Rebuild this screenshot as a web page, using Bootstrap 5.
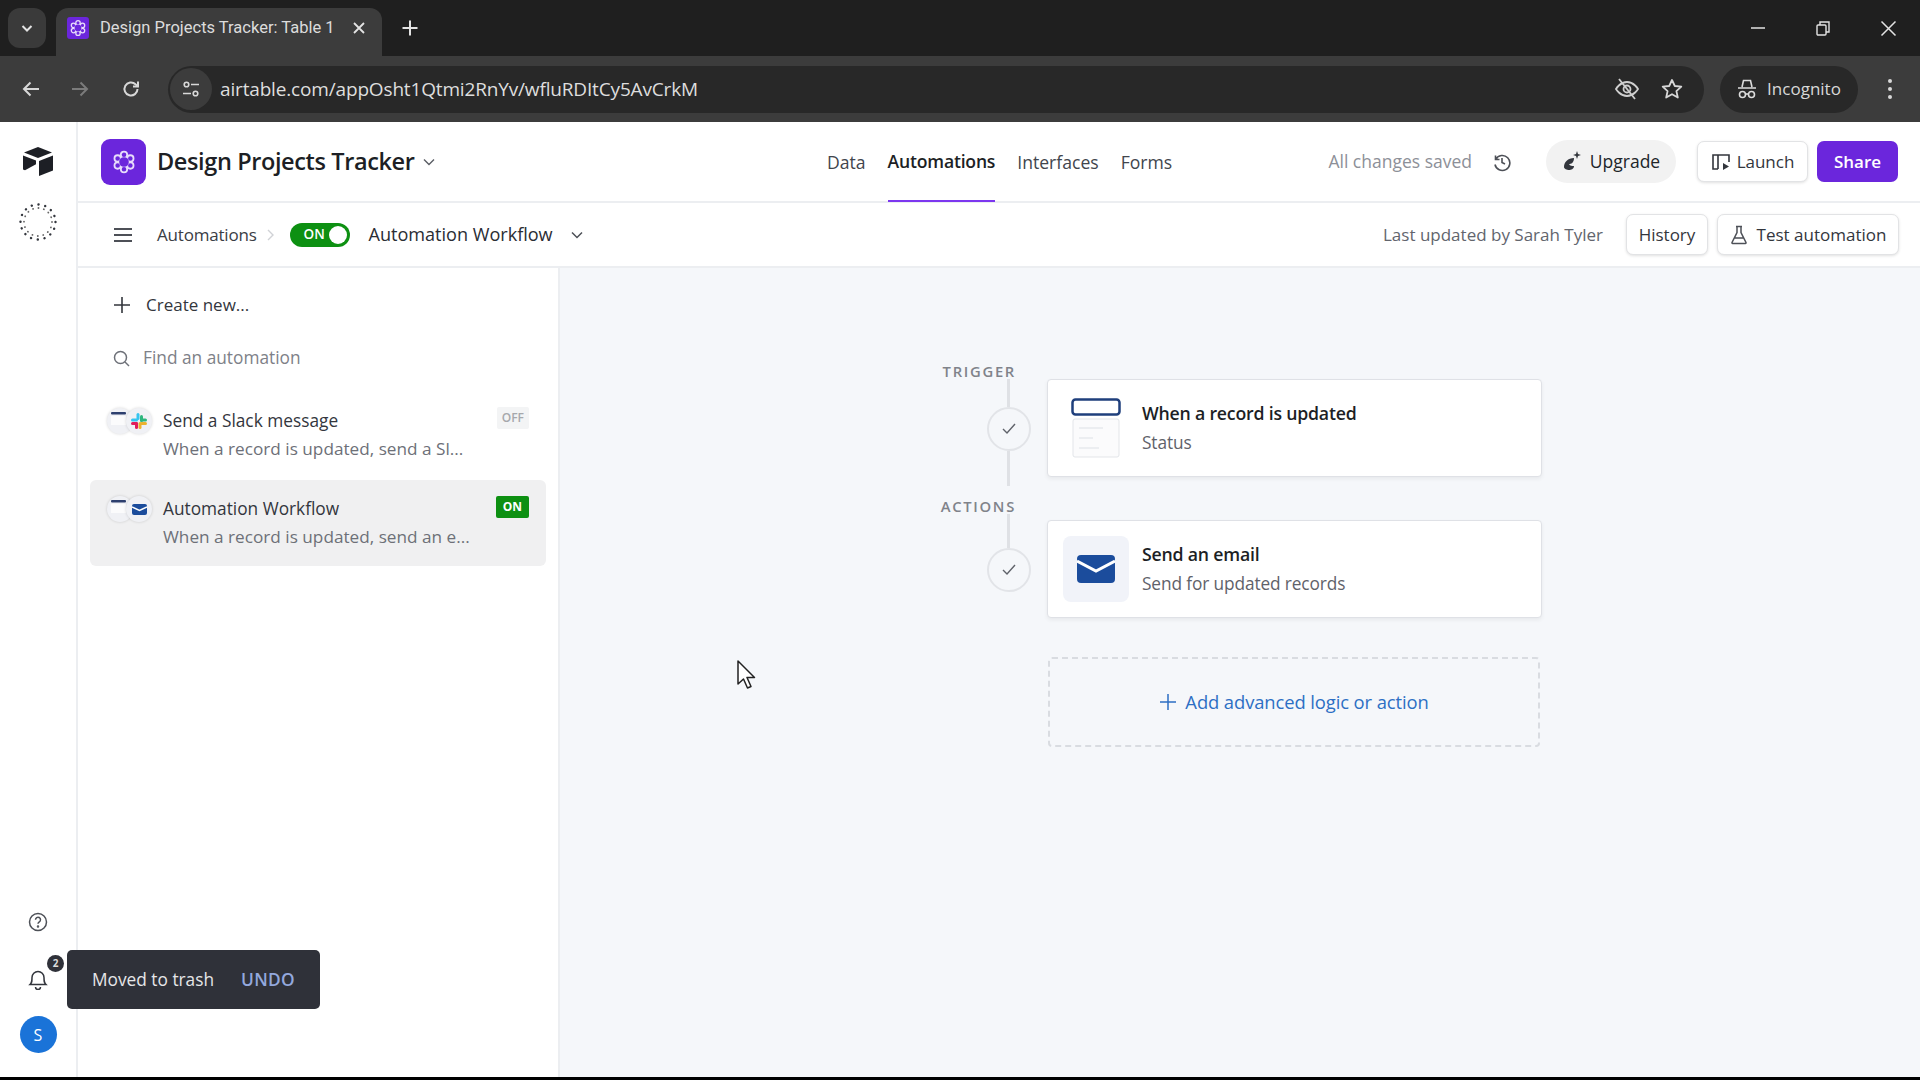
<!doctype html>
<html lang="en">
<head>
<meta charset="utf-8">
<title>Design Projects Tracker</title>
<link href="https://cdn.jsdelivr.net/npm/bootstrap@5.3.0/dist/css/bootstrap.min.css" rel="stylesheet">
<style>
html,body{height:1080px;overflow:hidden;background:#000}
body{font-family:"Open Sans","Noto Sans",sans-serif;color:#1d1f25;width:1920px;position:relative}
svg{display:block;flex:none}
.tabbar{height:56px;background:#1f1f1f;padding-left:8px;color:#e3e3e3}
.tabdrop{width:38px;height:40px;margin-top:8px;background:#3a3a3a;border-radius:12px}
.chrometab{width:326px;height:48px;margin-top:8px;margin-left:10px;background:#3c3c3c;border-radius:12px 12px 0 0;padding:0 16px 8px 11px;font-size:16.5px;white-space:nowrap}
.chrometab .tabname{width:236px;margin-left:11px;overflow:hidden;color:#dcdcdc;font-family:Roboto,sans-serif}
.addtab{margin-left:19px}
.winctl{gap:49px;padding-right:23px}
.toolbar{height:66px;background:#3c3c3c;padding:9px 15px 9px 21px;color:#d8d8d8}
.omni{width:1536px;height:47px;margin-left:27px;background:#282828;border-radius:24px;padding-right:20px}
.tunebtn{width:42px;height:42px;margin-left:2px;background:#3c3c3c;border-radius:50%}
.urltext{font-size:19px;margin-left:8px;color:#dedede;white-space:nowrap;letter-spacing:-.16px}
.fwdgap{margin-left:29px}
.relgap{margin-left:31px}
.stargap{margin-left:20px}
.incog{width:138px;height:47px;margin-left:16px;background:#282828;border-radius:24px;font-size:17px;gap:10px}
.apparea{height:955px;background:#fff}
.rail{width:78px;border-right:2px solid #eceef1;padding:24px 0 24px}
.spinmark{margin-top:26px}
.mainpane{width:1842px}
.apphead{height:81px;border-bottom:2px solid #eceef1;padding:0 22px 0 23px}
.appmark{width:45px;height:46px;background:#6b26dc;border-radius:9px}
.apptitle{font-size:23.5px;font-weight:600;margin-left:11px;letter-spacing:-.38px;white-space:nowrap}
.toptabs{position:absolute;left:749px;top:0;height:80px;gap:22px;font-size:17.6px;color:#41454d}
.toptab{height:80px;display:flex;align-items:center}
.toptab.current{color:#1d1f25;font-weight:600;border-bottom:2px solid #7c37ef;letter-spacing:-.2px}
.savedtxt{font-size:17.5px;color:#8d9098;white-space:nowrap}
.histicon{margin-left:20px}
.upbtn{height:43px;width:130px;background:#f2f2f2;border-radius:22px;font-size:17.5px;gap:6px;margin-left:34px;padding:0}
.plainbtn{background:#fff;border:1px solid #e2e3e5;box-shadow:0 1px 3px rgba(0,0,0,.12);border-radius:7px;color:#33363d;font-size:17px;padding:0;height:41px;gap:6px}
.sharebtn{background:#6b26dc;color:#fff;font-weight:600;border-radius:7px;width:81px;height:41px;font-size:17px;padding:0;margin-left:9px;border:0}
.subhead{height:65px;border-bottom:2px solid #eceef1;padding:0 21px 0 36px;font-size:17px}
.lightcrumb{color:#3a3d45;margin-left:25px;letter-spacing:-.2px}
.switchpill{width:60px;height:24px;background:#0d9012;border-radius:12px;color:#fff;font-size:13.5px;font-weight:600;padding:0 3px 0 14px;margin-left:14px}
.switchknob{width:18px;height:18px;background:#fff;border-radius:50%}
.flowname{font-size:18.1px;font-weight:500;margin-left:19px;color:#2a2d34;white-space:nowrap;letter-spacing:-.02px}
.flowchev{margin-left:17px}
.updated{color:#62656d;white-space:nowrap;margin-right:23px}
.bodyrow{height:809px}
.sidepane{width:482px;border-right:2px solid #eceef1;background:#fff;padding:6px 12px 0}
.createrow{height:62px;padding-left:23px;font-size:17px;color:#33363d;gap:15px}
.searchrow{height:44px;padding-left:23px;font-size:17.3px;color:#7e8188;gap:13px}
.autorow{height:86px;border-radius:6px;padding:20px 16px 0 17px;position:relative}
.autorow.picked{background:#f0f0f1}
.duo{width:45px;height:26px;position:relative;margin-top:-4px}
.duoitem{width:26px;height:26px;border-radius:50%;background:#f0f1f5;box-shadow:0 0 3px rgba(0,0,0,.16);position:absolute;top:0}
.rowmain{margin-left:11px;line-height:1.2}
.rowtitle{font-size:17.3px;color:#33363d;margin-top:-1px}
.rowsub{font-size:17.2px;color:#6d7078;margin-top:7px;white-space:nowrap}
.stat{position:absolute;right:17px;top:16px;font-size:12px;font-weight:700;border-radius:2px;padding:4px 5px;line-height:14px}
.stat.off{background:#f3f4f5;color:#a6a8ac;font-weight:600;top:15px}
.stat.on{background:#0d9012;color:#fff;padding:4px 7px}
.canvaspane{width:1360px;background:#f5f7fa;padding:93px 0 0 370px}
.flowrow{display:grid;grid-template-columns:85px 495px;column-gap:32px}
.leftcol{display:flex;flex-direction:column;align-items:flex-end}
.stepword{font-size:14.8px;font-weight:600;letter-spacing:1.7px;color:#80838a;line-height:16px;height:16px;margin-top:2px;margin-right:-1px}
.stemline{width:3px;background:#dfe1e5;margin-right:5px}
.stepdot{width:44px;height:44px;border:2px solid #e2e4e8;border-radius:50%;margin-right:-16px;background:#f5f7fa}
.stepcard{height:98px;background:#fff;border:1px solid #dfe1e6;border-radius:4px;box-shadow:0 2px 4px rgba(0,0,0,.06);padding-left:15px;flex-direction:row}
.cardname{font-size:17.7px;font-weight:600;color:#1d1f25;line-height:24px;letter-spacing:-.2px}
.carddesc{font-size:17.3px;color:#5f626a;line-height:24px;margin-top:6px;letter-spacing:-.12px}
.picwrap{width:66px;height:66px;margin-right:13px}
.picwrap.mailbg{background:#f1f3f9;border-radius:8px}
.addlogic{width:492px;height:90px;margin:39px 0 0 118px;border:2px dashed #d9dce1;border-radius:4px;color:#2d6fc4;font-size:18.4px;font-weight:500;gap:8px;letter-spacing:-.1px}
.toastbox{position:absolute;left:67px;top:950px;width:253px;height:59px;background:#2f3139;border-radius:5px;font-size:17.3px;color:#e6e6e8;padding-left:25px;gap:27px}
.undolink{color:#93a8dd;font-weight:600;letter-spacing:.3px}
.bellbadge{position:absolute;left:47px;top:955px;width:17px;height:17px;border-radius:50%;background:#2f3139;color:#ddd;font-size:10px;font-weight:700}
.avatarS{width:37px;height:37px;background:#1a73d8;border-radius:50%;color:#fff;font-size:16px;font-weight:500;margin-top:26px}
.bellgap{margin-top:36px}
.blackedge{height:3px;background:#000}
</style>
</head>
<body>
<div class="tabbar d-flex">
  <div class="tabdrop d-flex align-items-center justify-content-center">
    <svg width="14" height="14" viewBox="0 0 14 14" fill="none" stroke="#e3e3e3" stroke-width="2"><path d="M2.500 5l4.500 4.500L11.500 5"/></svg>
  </div>
  <div class="chrometab d-flex align-items-center">
    <svg width="22" height="22" viewBox="0 0 22 22"><rect width="22" height="22" rx="3" fill="#6b26dc"/><g fill="none" stroke="#e8dcfb" stroke-width="1.300"><circle cx="11" cy="5.800" r="2.200"/><circle cx="15.500" cy="8.400" r="2.200"/><circle cx="15.500" cy="13.600" r="2.200"/><circle cx="11" cy="16.200" r="2.200"/><circle cx="6.500" cy="13.600" r="2.200"/><circle cx="6.500" cy="8.400" r="2.200"/></g><circle cx="11" cy="11" r="3.400" fill="#6b26dc"/></svg>
    <div class="tabname">Design Projects Tracker: Table 1</div>
    <svg class="ms-auto" width="14" height="14" viewBox="0 0 14 14" stroke="#e3e3e3" stroke-width="1.800"><path d="M2 2l10 10M12 2L2 12"/></svg>
  </div>
  <div class="d-flex align-items-center addtab">
    <svg width="18" height="18" viewBox="0 0 18 18" stroke="#e3e3e3" stroke-width="2"><path d="M9 1.500v15M1.500 9h15"/></svg>
  </div>
  <div class="ms-auto d-flex align-items-center winctl">
    <svg width="16" height="16" viewBox="0 0 16 16" stroke="#e3e3e3" stroke-width="1.500"><path d="M1 8h14"/></svg>
    <svg width="16" height="16" viewBox="0 0 16 16" fill="none" stroke="#e3e3e3" stroke-width="1.400"><rect x="2" y="5" width="9" height="10" rx="1"/><path d="M5 5V2h9v10h-3"/></svg>
    <svg width="17" height="17" viewBox="0 0 17 17" stroke="#e3e3e3" stroke-width="1.500"><path d="M1.500 1.500l14 14M15.500 1.500l-14 14"/></svg>
  </div>
</div>

<div class="toolbar d-flex align-items-center">
  <svg width="20" height="20" viewBox="0 0 20 20" fill="none" stroke="#d8d8d8" stroke-width="2"><path d="M18 10H3M9.500 3.500L3 10l6.500 6.500"/></svg>
  <svg class="fwdgap" width="20" height="20" viewBox="0 0 20 20" fill="none" stroke="#7b7b7b" stroke-width="2"><path d="M2 10h15M10.500 3.500L17 10l-6.500 6.500"/></svg>
  <svg class="relgap" width="20" height="20" viewBox="0 0 20 20" fill="none" stroke="#d8d8d8" stroke-width="2"><path d="M16.500 10a6.500 6.500 0 1 1-2-4.700L17 7.500"/><path d="M17 2.500v5h-5"/></svg>
  <div class="omni d-flex align-items-center">
    <div class="tunebtn d-flex align-items-center justify-content-center">
      <svg width="20" height="20" viewBox="0 0 20 20" fill="none" stroke="#d8d8d8" stroke-width="1.600"><circle cx="5.500" cy="5.500" r="2.300"/><path d="M10 5.500h8M2 14.500h8"/><circle cx="14.500" cy="14.500" r="2.300"/></svg>
    </div>
    <div class="urltext">airtable.com/appOsht1Qtmi2RnYv/wfluRDItCy5AvCrkM</div>
    <svg class="ms-auto" width="26" height="24" viewBox="0 0 26 24" fill="none" stroke="#d0d0d0" stroke-width="1.800"><path d="M2 12s4-7 11-7 11 7 11 7-4 7-11 7-11-7-11-7z"/><circle cx="13" cy="12" r="3.500"/><path d="M5 2l16 20"/></svg>
    <svg class="stargap" width="24" height="24" viewBox="0 0 24 24" fill="none" stroke="#d8d8d8" stroke-width="1.800" stroke-linejoin="round"><path d="M12 3l2.800 6 6.500.7-4.900 4.400 1.400 6.400L12 17.200 6.200 20.500l1.400-6.400-4.900-4.400 6.500-.7z"/></svg>
  </div>
  <div class="incog d-flex align-items-center justify-content-center">
    <svg width="20" height="22" viewBox="0 0 20 22" fill="none" stroke="#dcdcdc" stroke-width="1.600"><path d="M5 9l1.500-6.500h7L15 9M1 10h18"/><circle cx="5.500" cy="16.500" r="3"/><circle cx="14.500" cy="16.500" r="3"/><path d="M8.500 16h3"/></svg>
    <span>Incognito</span>
  </div>
  <svg class="ms-auto" style="margin-right:12px" width="6" height="22" viewBox="0 0 6 22" fill="#d8d8d8"><circle cx="3" cy="3" r="2"/><circle cx="3" cy="11" r="2"/><circle cx="3" cy="19" r="2"/></svg>
</div>

<div class="apparea d-flex">
  <div class="rail d-flex flex-column align-items-center">
    <svg width="34" height="30" viewBox="0 0 34 30"><path d="M17 1L3 6.500 17 12l14-5.500z" fill="#1d1f25"/><path d="M2 9.500v14l2 .8 11-6V14.500z" fill="#1d1f25"/><path d="M32 9.500v15l-14 5.500V15z" fill="#1d1f25"/></svg>
    <svg class="spinmark" width="40" height="40" viewBox="0 0 40 40" fill="none" stroke="#33363d" stroke-linecap="round"><circle cx="20" cy="20" r="17.500" stroke-width="2.400" stroke-dasharray="0.100 6.770"/><circle cx="20" cy="20" r="14" stroke-width="1.800" stroke-dasharray="0.100 5.400" stroke="#666"/></svg>
    <div class="mt-auto d-flex flex-column align-items-center">
      <svg width="20" height="20" viewBox="0 0 20 20" fill="none" stroke="#4d5057" stroke-width="1.500"><circle cx="10" cy="10" r="8.500"/><path d="M7.500 7.700a2.500 2.500 0 1 1 3.800 2.100c-.9.600-1.300 1-1.300 2"/><circle cx="10" cy="14.600" r=".5" fill="#4d5057"/></svg>
      <svg class="bellgap" width="20" height="22" viewBox="0 0 20 22" fill="none" stroke="#33363d" stroke-width="1.500"><path d="M2 16.500c2-2 2-3 2-7a6 6 0 0 1 12 0c0 4 0 5 2 7z"/><path d="M7.500 19a2.500 2.500 0 0 0 5 0"/></svg>
      <div class="avatarS d-flex align-items-center justify-content-center">S</div>
    </div>
  </div>
  <div class="mainpane d-flex flex-column position-relative">
    <div class="apphead d-flex align-items-center">
      <div class="appmark d-flex align-items-center justify-content-center">
        <svg width="28" height="28" viewBox="0 0 22 22"><g fill="none" stroke="#e8dcfb" stroke-width="1.400"><circle cx="11" cy="5.300" r="2.500"/><circle cx="16" cy="8.200" r="2.500"/><circle cx="16" cy="13.800" r="2.500"/><circle cx="11" cy="16.700" r="2.500"/><circle cx="6" cy="13.800" r="2.500"/><circle cx="6" cy="8.200" r="2.500"/></g><circle cx="11" cy="11" r="3.800" fill="#6b26dc"/></svg>
      </div>
      <div class="apptitle">Design Projects Tracker</div>
      <svg class="ms-2" width="14" height="14" viewBox="0 0 14 14" fill="none" stroke="#5b5e65" stroke-width="1.400"><path d="M2 4.500l5 5 5-5"/></svg>
      <div class="toptabs d-flex">
        <div class="toptab">Data</div>
        <div class="toptab current">Automations</div>
        <div class="toptab">Interfaces</div>
        <div class="toptab">Forms</div>
      </div>
      <div class="ms-auto d-flex align-items-center">
        <span class="savedtxt">All changes saved</span>
        <svg class="histicon" width="20" height="20" viewBox="0 0 20 20" fill="none" stroke="#4d5057" stroke-width="1.600"><path d="M3.500 3.500v4h4M3.800 7.300A7.500 7.500 0 1 1 3 12.500"/><path d="M10 6v4.500l3 1.500"/></svg>
        <button type="button" class="btn upbtn d-flex align-items-center justify-content-center">
          <svg width="22" height="24" viewBox="0 0 22 24" fill="#33363d"><path d="M15 1l1 3 3 1-3 1-1 3-1-3-3-1 3-1z"/><path d="M2 17c0-5 4-9 10-9 0 5-3 6-5 6 1 2 3 2 5 2 0 3-3 4-5 4-2 0-5-1-5-3z"/></svg>
          <span>Upgrade</span>
        </button>
        <button type="button" class="btn plainbtn d-flex align-items-center justify-content-center" style="width:111px;margin-left:21px">
          <svg width="20" height="20" viewBox="0 0 20 20" fill="none" stroke="#33363d" stroke-width="1.600"><path d="M7 17H2V3h16v7M7 3v14"/><path d="M12 11l6 3.500-6 3.500z" fill="#33363d" stroke="none"/></svg>
          <span>Launch</span>
        </button>
        <button type="button" class="btn sharebtn">Share</button>
      </div>
    </div>
    <div class="subhead d-flex align-items-center">
      <svg width="18" height="16" viewBox="0 0 18 16" stroke="#4d5057" stroke-width="1.800"><path d="M0 2h18M0 8h18M0 14h18"/></svg>
      <span class="lightcrumb">Automations</span>
      <svg style="margin-left:9px" width="10" height="14" viewBox="0 0 10 14" fill="none" stroke="#d0d2d6" stroke-width="1.400"><path d="M2 2l5 5-5 5"/></svg>
      <div class="switchpill d-flex align-items-center justify-content-between"><span>ON</span><span class="switchknob"></span></div>
      <span class="flowname">Automation Workflow</span>
      <svg class="flowchev" width="14" height="14" viewBox="0 0 14 14" fill="none" stroke="#4d5057" stroke-width="1.500"><path d="M2 4.500l5 5 5-5"/></svg>
      <span class="updated ms-auto">Last updated by Sarah Tyler</span>
      <button type="button" class="btn plainbtn" style="width:82px">History</button>
      <button type="button" class="btn plainbtn d-flex align-items-center justify-content-center" style="width:182px;margin-left:9px;gap:9px">
        <svg width="18" height="20" viewBox="0 0 18 20" fill="none" stroke="#4d5057" stroke-width="1.500"><path d="M6 1.500h6M7 1.500v6L2 17.500a.7.7 0 0 0 .6 1h12.800a.7.7 0 0 0 .6-1L11 7.500v-6M4.500 13h9"/></svg>
        <span>Test automation</span>
      </button>
    </div>
    <div class="bodyrow d-flex">
      <div class="sidepane">
        <div class="createrow d-flex align-items-center">
          <svg width="18" height="18" viewBox="0 0 18 18" stroke="#33363d" stroke-width="1.600"><path d="M9 1v16M1 9h16"/></svg>
          <span>Create new...</span>
        </div>
        <div class="searchrow d-flex align-items-center">
          <svg width="17" height="17" viewBox="0 0 17 17" fill="none" stroke="#6d7078" stroke-width="1.500"><circle cx="7.500" cy="7.500" r="6"/><path d="M12 12l4 4"/></svg>
          <span>Find an automation</span>
        </div>
        <div class="autorow d-flex" style="margin-top:12px">
          <div class="duo">
            <div class="duoitem d-flex justify-content-center" style="left:0"><svg width="18" height="18" viewBox="0 0 18 18"><rect x="0" y="4" width="15" height="2.500" rx="1" fill="#2d3f6e"/><rect x="0" y="8" width="15" height="9" fill="#fbfbfc"/></svg></div>
            <div class="duoitem d-flex align-items-center justify-content-center" style="left:19px"><svg width="16" height="16" viewBox="0 0 16 16"><rect x="5.500" y="0" width="3" height="7" rx="1.500" fill="#36c5f0"/><rect x="0" y="5.500" width="7" height="3" rx="1.500" fill="#36c5f0"/><rect x="9" y="2" width="3" height="7" rx="1.500" fill="#2eb67d"/><rect x="9" y="5.500" width="7" height="3" rx="1.500" fill="#2eb67d"/><rect x="7.500" y="9" width="3" height="7" rx="1.500" fill="#ecb22e"/><rect x="9" y="9" width="7" height="3" rx="1.500" fill="#ecb22e"/><rect x="4" y="9" width="3" height="7" rx="1.500" fill="#e01e5a"/><rect x="0" y="9" width="7" height="3" rx="1.500" fill="#e01e5a"/></svg></div>
          </div>
          <div class="rowmain">
            <div class="rowtitle">Send a Slack message</div>
            <div class="rowsub">When a record is updated, send a Sl...</div>
          </div>
          <span class="stat off">OFF</span>
        </div>
        <div class="autorow picked d-flex" style="margin-top:2px">
          <div class="duo">
            <div class="duoitem d-flex justify-content-center" style="left:0"><svg width="18" height="18" viewBox="0 0 18 18"><rect x="0" y="4" width="15" height="2.500" rx="1" fill="#2d3f6e"/><rect x="0" y="8" width="15" height="9" fill="#fbfbfc"/></svg></div>
            <div class="duoitem d-flex align-items-center justify-content-center" style="left:19px"><svg width="15" height="11" viewBox="0 0 15 11"><rect width="15" height="11" rx="2" fill="#1b4c9c"/><path d="M0 3l7.500 3.500L15 3" fill="none" stroke="#fff" stroke-width="1.500"/></svg></div>
          </div>
          <div class="rowmain">
            <div class="rowtitle">Automation Workflow</div>
            <div class="rowsub">When a record is updated, send an e...</div>
          </div>
          <span class="stat on">ON</span>
        </div>
      </div>
      <div class="canvaspane">
        <div class="flowrow" style="height:135px">
          <div class="leftcol">
            <span class="stepword">TRIGGER</span>
            <span class="stemline" style="height:28px"></span>
            <span class="stepdot d-flex align-items-center justify-content-center"><svg width="16" height="14" viewBox="0 0 16 14" fill="none" stroke="#5f626a" stroke-width="1.400"><path d="M2 7l4 4 8-9"/></svg></span>
            <span class="stemline" style="height:35px"></span>
          </div>
          <div style="padding-top:18px">
            <div class="card stepcard align-items-center">
              <div class="picwrap d-flex align-items-center justify-content-center">
                <svg width="50" height="60" viewBox="0 0 50 60" fill="none"><rect x="2" y="21" width="46" height="38" rx="2" fill="#fbfbfc" stroke="#e3e5e9"/><rect x="1.500" y="1.500" width="47" height="15" rx="3" fill="#fff" stroke="#1f3f7c" stroke-width="2.500"/><path d="M8 30h24M8 40h14M8 50h20" stroke="#eceef1" stroke-width="2"/></svg>
              </div>
              <div>
                <div class="cardname">When a record is updated</div>
                <div class="carddesc">Status</div>
              </div>
            </div>
          </div>
        </div>
        <div class="flowrow">
          <div class="leftcol">
            <span class="stepword">ACTIONS</span>
            <span class="stemline" style="height:34px"></span>
            <span class="stepdot d-flex align-items-center justify-content-center"><svg width="16" height="14" viewBox="0 0 16 14" fill="none" stroke="#5f626a" stroke-width="1.400"><path d="M2 7l4 4 8-9"/></svg></span>
          </div>
          <div style="padding-top:24px">
            <div class="card stepcard align-items-center">
              <div class="picwrap mailbg d-flex align-items-center justify-content-center">
                <svg width="38" height="28" viewBox="0 0 38 28"><rect width="38" height="28" rx="4" fill="#1b4c9c"/><path d="M0 6l19 10L38 6" fill="none" stroke="#fff" stroke-width="3"/></svg>
              </div>
              <div>
                <div class="cardname">Send an email</div>
                <div class="carddesc">Send for updated records</div>
              </div>
            </div>
          </div>
        </div>
        <div class="addlogic d-flex align-items-center justify-content-center">
          <svg width="18" height="18" viewBox="0 0 18 18" stroke="#2d6fc4" stroke-width="1.500"><path d="M9 1v16M1 9h16"/></svg>
          <span>Add advanced logic or action</span>
        </div>
      </div>
    </div>
  </div>
</div>
<div class="blackedge"></div>

<span class="bellbadge d-flex align-items-center justify-content-center">2</span>
<div class="toastbox d-flex align-items-center"><span>Moved to trash</span><span class="undolink">UNDO</span></div>
<svg class="position-absolute" style="left:736px;top:660px" width="20" height="30" viewBox="0 0 20 30"><path d="M2 1v23l5.500-5 4 9 3.500-1.500-4-9h7.500z" fill="#fff" stroke="#222" stroke-width="1.500" stroke-linejoin="round"/></svg>

<script src="https://cdn.jsdelivr.net/npm/bootstrap@5.3.0/dist/js/bootstrap.bundle.min.js"></script>
</body>
</html>
